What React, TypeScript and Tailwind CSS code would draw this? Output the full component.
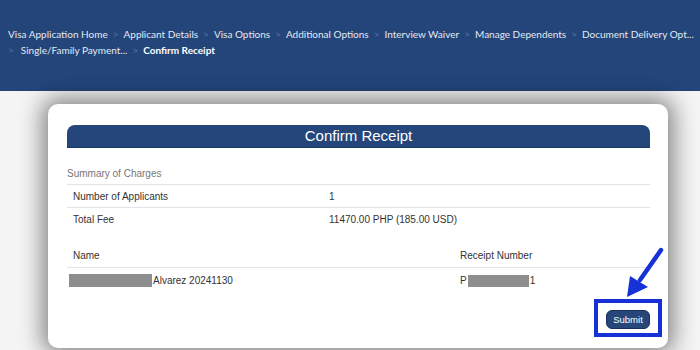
import React from 'react';

const crumbs = [
  'Visa Application Home',
  'Applicant Details',
  'Visa Options',
  'Additional Options',
  'Interview Waiver',
  'Manage Dependents',
  'Document Delivery Opt...',
];

function Sep() {
  return <span className="mx-[5px] text-[#5a74a0]">&gt;</span>;
}

export default function App() {
  return (
    <div className="w-[700px] h-[350px] overflow-hidden bg-[#f4f4f4]">
      {/* Breadcrumb header */}
      <div className="h-[91px] bg-[#23457a] pl-[8px] pt-[26px] text-[10px] leading-[16px] text-[#e4e9f2] font-['Lato',sans-serif]">
        <div className="whitespace-nowrap">
          {crumbs.map((c, i) => (
            <span key={c}>
              {i > 0 && <Sep />}
              {c}
            </span>
          ))}
        </div>
        <div className="whitespace-nowrap">
          <span className="mr-[7px] text-[#5a74a0]">&gt;</span>
          Single/Family Payment...
          <Sep />
          <span className="font-bold text-white">Confirm Receipt</span>
        </div>
      </div>

      {/* Card */}
      <div className="relative ml-[48px] mt-[13px] w-[620px] h-[244px] rounded-[10px] bg-white shadow-[0_0_22px_6px_rgba(0,0,0,0.45)] pt-[21px] pl-[19px] pr-[18px] font-['Liberation_Sans',Arial,sans-serif]">
        <div className="h-[23px] rounded-t-[8px] bg-[#25467a] border-b border-[#1c3660] flex items-center justify-center text-[15px] text-white">
          Confirm Receipt
        </div>

        <div className="mt-[15px] h-[21px] flex items-center text-[10px] text-[#777]">
          Summary of Charges
        </div>
        <div className="border-t border-[#e4e4e4]">
          <div className="h-[23px] flex items-center text-[10px] text-[#333] border-b border-[#e4e4e4]">
            <span className="pl-[6px] w-[262px]">Number of Applicants</span>
            <span>1</span>
          </div>
          <div className="h-[23px] flex items-center text-[10px] text-[#333]">
            <span className="pl-[6px] w-[262px]">Total Fee</span>
            <span>11470.00 PHP (185.00 USD)</span>
          </div>
        </div>

        <div className="mt-[13px] h-[24px] flex items-center text-[10px] text-[#333] border-b border-[#e4e4e4]">
          <span className="pl-[6px] w-[393px]">Name</span>
          <span>Receipt Number</span>
        </div>
        <div className="h-[25px] flex items-center text-[10px] text-[#333]">
          <span className="pl-[2px] w-[393px] flex items-center">
            <span className="inline-block w-[83px] h-[13px] bg-[#8e8e8e] mr-[1px]" />
            Alvarez 20241130
          </span>
          <span className="flex items-center">
            P
            <span className="inline-block w-[61px] h-[12px] bg-[#8e8e8e] mx-[1px]" />
            1
          </span>
        </div>

        <div className="flex justify-end mt-[6px] mr-[-12px]">
          <div className="border-[4px] border-[#1631d6] px-[8px] py-[3px]">
            <button className="w-[44px] h-[19px] rounded-[6px] bg-[#27477a] border border-[#18305a] text-[9.5px] text-white leading-none">
              Submit
            </button>
          </div>
        </div>

        {/* Annotation arrow */}
        <svg className="absolute left-[572px] top-[142px]" width="48" height="60" viewBox="0 0 48 60">
          <line x1="41" y1="4" x2="20" y2="34" stroke="#1631d6" strokeWidth="4.5" strokeLinecap="round" />
          <polygon points="7,51 10,30 28,41" fill="#1631d6" />
        </svg>
      </div>
    </div>
  );
}
